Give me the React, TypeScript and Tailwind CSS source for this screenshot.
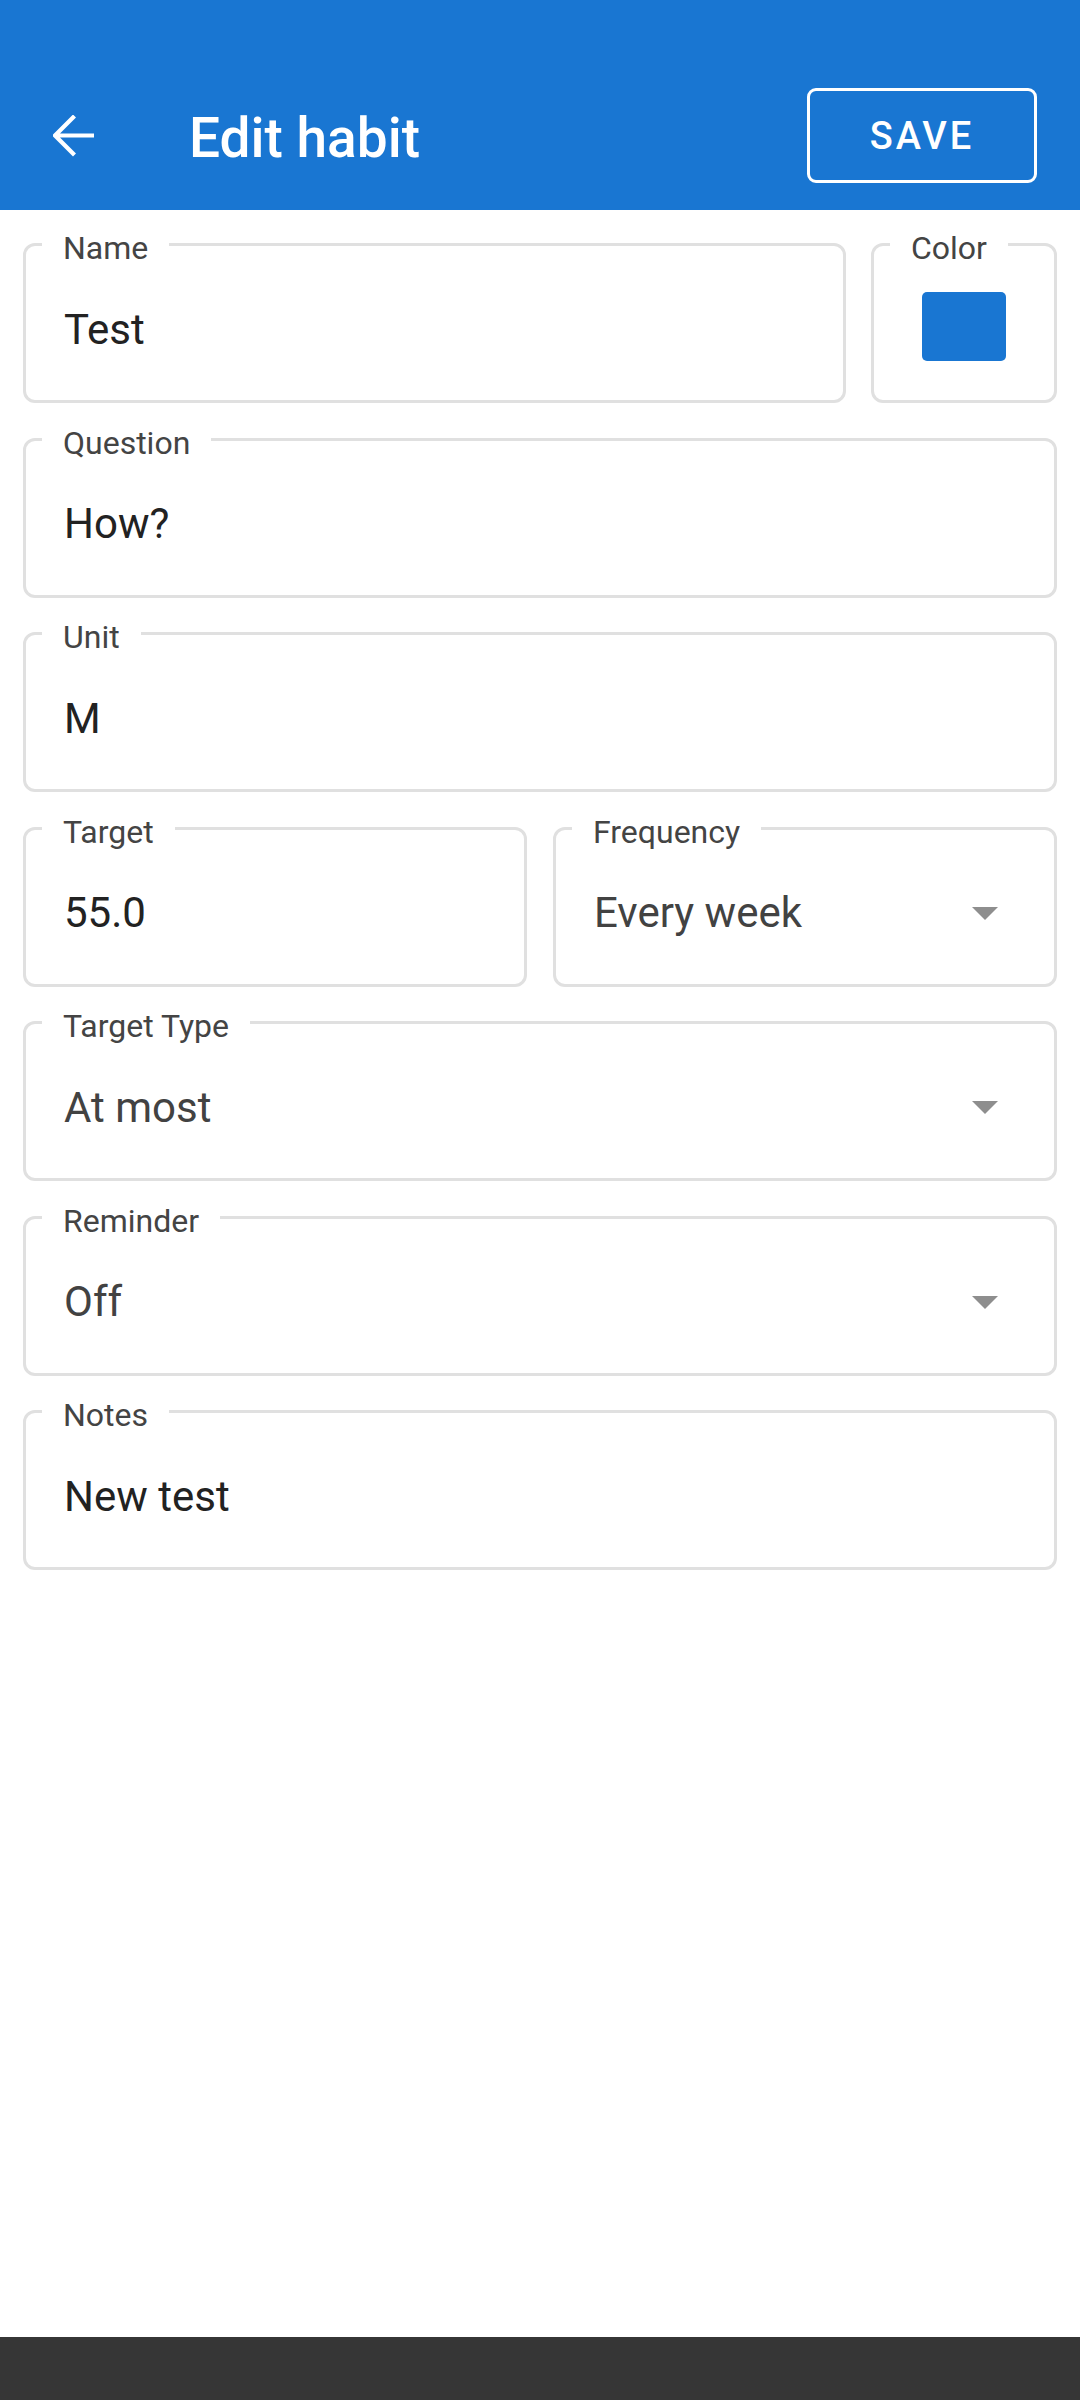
import { FC, ReactNode } from 'react';

const Field: FC<{ label: string; children: ReactNode; className?: string }> = ({
  label,
  children,
  className = '',
}) => (
  <div
    className={`relative h-[160px] rounded-[12px] border-[3px] border-[#e0e0e0] bg-white ${className}`}
  >
    <span className="absolute left-[16px] top-[-14px] bg-white px-[21px] text-[32px] leading-[32px] text-[#444444]">
      {label}
    </span>
    {children}
  </div>
);

const TextValue: FC<{ value: string }> = ({ value }) => (
  <div className="flex h-full items-center pl-[38px] pt-[13px] text-[42px] leading-[42px] text-[#222222]">
    {value}
  </div>
);

const SelectValue: FC<{ value: string }> = ({ value }) => (
  <div className="flex h-full items-center pl-[38px] pr-[56px] pt-[13px]">
    <span className="flex-1 text-[42px] leading-[42px] text-[#424242]">{value}</span>
    <svg width="26" height="13" viewBox="0 0 26 13">
      <polygon points="0,0 26,0 13,13" fill="#8e8e8e" />
    </svg>
  </div>
);

const App: FC = () => {
  return (
    <div className="flex h-[2400px] w-[1080px] flex-col bg-white font-['Roboto',sans-serif]">
      {/* Toolbar */}
      <div className="h-[210px] bg-[#1976d2] pt-[88px]">
        <div className="flex h-[95px] items-center pl-[53px] pr-[43px]">
          <svg width="42" height="42" viewBox="0 0 42 42" fill="none">
            <path
              d="M2 20.5 H41 M21.5 1 L2 20.5 L21.5 40"
              stroke="white"
              strokeWidth="4.2"
              strokeLinejoin="miter"
            />
          </svg>
          <h1 className="ml-[94px] mt-[6px] flex-1 text-[55px] font-medium leading-[55px] text-white">
            Edit habit
          </h1>
          <button
            type="button"
            className="flex h-[95px] w-[230px] items-center justify-center rounded-[9px] border-[3px] border-white text-[38px] font-medium leading-[38px] tracking-[3px] text-white"
          >
            SAVE
          </button>
        </div>
      </div>

      {/* Form */}
      <div className="flex flex-1 flex-col gap-[34.5px] px-[23px] pt-[33px]">
        <div className="flex gap-[25px]">
          <Field label="Name" className="flex-1">
            <TextValue value="Test" />
          </Field>
          <Field label="Color" className="w-[186px]">
            <div className="flex h-full items-center justify-center pt-[7px]">
              <div className="h-[69px] w-[84px] rounded-[5px] bg-[#1976d2]" />
            </div>
          </Field>
        </div>

        <Field label="Question">
          <TextValue value="How?" />
        </Field>

        <Field label="Unit">
          <TextValue value="M" />
        </Field>

        <div className="grid grid-cols-2 gap-[26px]">
          <Field label="Target">
            <TextValue value="55.0" />
          </Field>
          <Field label="Frequency">
            <SelectValue value="Every week" />
          </Field>
        </div>

        <Field label="Target Type">
          <SelectValue value="At most" />
        </Field>

        <Field label="Reminder">
          <SelectValue value="Off" />
        </Field>

        <Field label="Notes">
          <TextValue value="New test" />
        </Field>
      </div>

      {/* Navigation bar */}
      <div className="h-[63px] bg-[#363636]" />
    </div>
  );
};

export default App;
